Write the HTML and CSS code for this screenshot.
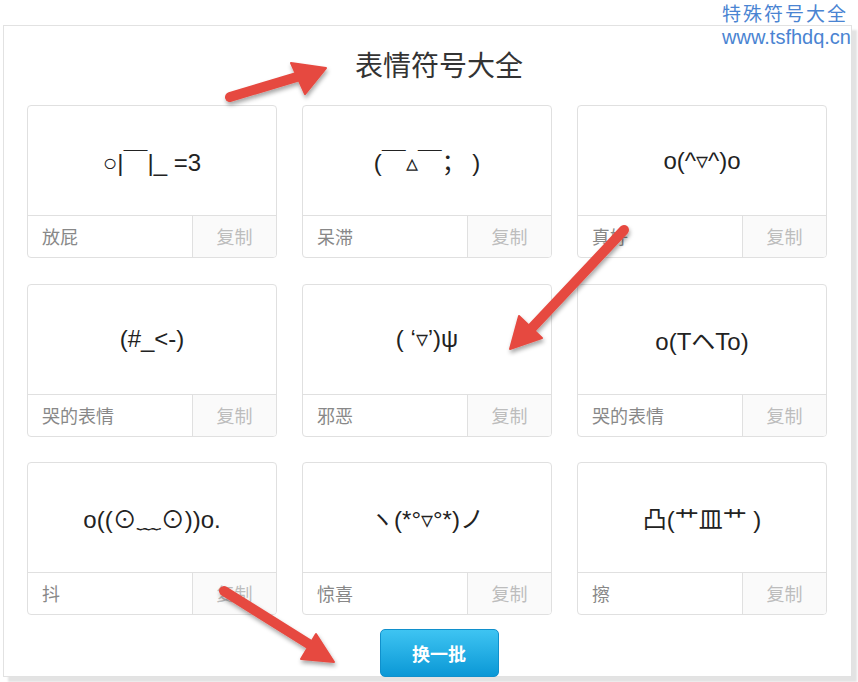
FILE: index.html
```html
<!DOCTYPE html>
<html lang="zh">
<head>
<meta charset="utf-8">
<title>表情符号大全</title>
<link rel="stylesheet" href="styles.css">
</head>
<body>
<div class="panel">
  <h1 class="title">表情符号大全</h1>
  <div class="grid">
    <div class="card"><div class="emo">○|￣|_ =3</div><div class="foot"><span class="name">放屁</span><span class="copy">复制</span></div></div>
    <div class="card"><div class="emo">(￣▵￣； )</div><div class="foot"><span class="name">呆滞</span><span class="copy">复制</span></div></div>
    <div class="card"><div class="emo">o(^▿^)o</div><div class="foot"><span class="name">真好</span><span class="copy">复制</span></div></div>
    <div class="card"><div class="emo">(#_&lt;-)</div><div class="foot"><span class="name">哭的表情</span><span class="copy">复制</span></div></div>
    <div class="card"><div class="emo">( ‘▿’)ψ</div><div class="foot"><span class="name">邪恶</span><span class="copy">复制</span></div></div>
    <div class="card"><div class="emo">o(TヘTo)</div><div class="foot"><span class="name">哭的表情</span><span class="copy">复制</span></div></div>
    <div class="card"><div class="emo">o((⊙﹏⊙))o.</div><div class="foot"><span class="name">抖</span><span class="copy">复制</span></div></div>
    <div class="card"><div class="emo">ヽ(*°▿°*)ノ</div><div class="foot"><span class="name">惊喜</span><span class="copy">复制</span></div></div>
    <div class="card"><div class="emo">凸(艹皿艹 )</div><div class="foot"><span class="name">擦</span><span class="copy">复制</span></div></div>
  </div>
  <div class="actions"><button class="btn">换一批</button></div>
</div>

<div class="watermark">
  <div class="wm-cn">特殊符号大全</div>
  <div class="wm-url">www.tsfhdq.cn</div>
</div>

<svg class="arrows" width="858" height="682" viewBox="0 0 858 682">
  <defs>
    <filter id="sh" x="-20%" y="-20%" width="140%" height="140%">
      <feDropShadow dx="1" dy="3" stdDeviation="2" flood-color="#000" flood-opacity="0.35"/>
    </filter>
  </defs>
  <g fill="#e64a41" stroke="#e64a41" filter="url(#sh)">
    <line x1="230" y1="97" x2="300" y2="76" stroke-width="10" stroke-linecap="round"/>
    <polygon points="326,68 291,63 305,94" stroke-width="2" stroke-linejoin="round"/>
    <line x1="624" y1="230" x2="530" y2="330" stroke-width="10" stroke-linecap="round"/>
    <polygon points="510,349 519,316 542,338" stroke-width="2" stroke-linejoin="round"/>
    <line x1="224" y1="591" x2="312" y2="646" stroke-width="10" stroke-linecap="round"/>
    <polygon points="334,662 316,634 301,659" stroke-width="2" stroke-linejoin="round"/>
  </g>
</svg>
</body>
</html>
```
FILE: styles.css
```css
html, body {
  margin: 0;
  padding: 0;
  background: #ffffff;
}
body {
  width: 858px;
  height: 682px;
  position: relative;
  overflow: hidden;
  font-family: "Liberation Sans", "Noto Sans CJK SC", sans-serif;
}
.panel {
  box-sizing: border-box;
  margin: 25px 0 0 3px;
  width: 849px;
  height: 652px;
  border: 1px solid #e2e2e2;
  padding: 18px 0 0 23px;
  box-shadow: 5px 5px 2px #e3e3e3;
  background: #fff;
}
.title {
  margin: 0 0 21px 0;
  height: 40px;
  line-height: 40px;
  text-align: center;
  font-size: 28px;
  font-weight: normal;
  color: #333;
  font-family: "Noto Sans CJK SC", sans-serif;
}
.grid {
  display: grid;
  grid-template-columns: repeat(3, 250px);
  grid-auto-rows: 153px;
  column-gap: 25px;
  row-gap: 25.5px;
}
.card {
  box-sizing: border-box;
  border: 1px solid #e0e0e0;
  border-radius: 4px;
  display: flex;
  flex-direction: column;
  overflow: hidden;
}
.emo {
  flex: 1;
  display: flex;
  align-items: center;
  justify-content: center;
  font-size: 24px;
  color: #222;
  white-space: pre;
}
.foot {
  height: 41px;
  border-top: 1px solid #e0e0e0;
  display: flex;
  font-family: "Noto Sans CJK SC", sans-serif;
  font-size: 18px;
}
.name {
  flex: 1;
  padding-left: 14px;
  line-height: 41px;
  color: #888;
}
.copy {
  width: 83px;
  border-left: 1px solid #e0e0e0;
  background: #fafafa;
  text-align: center;
  line-height: 41px;
  color: #bdbdbd;
}
.actions {
  margin-top: 14px;
  display: flex;
  justify-content: center;
}
.btn {
  width: 119px;
  height: 48px;
  border: 1px solid #1090cc;
  border-radius: 5px;
  background: linear-gradient(#3ec4f2, #0b98d6);
  color: #fff;
  font-family: "Noto Sans CJK SC", sans-serif;
  font-weight: bold;
  font-size: 18px;
  padding: 0;
}
.watermark {
  position: absolute;
  top: 2px;
  right: 6px;
  text-align: right;
  color: #4a84d2;
}
.wm-cn {
  font-family: "Noto Sans CJK SC", sans-serif;
  font-size: 19px;
  letter-spacing: 2px;
  margin-right: 4px;
  line-height: 21px;
}
.wm-url {
  font-family: "Liberation Sans", sans-serif;
  font-size: 20px;
  line-height: 24px;
  margin-top: 2px;
  margin-right: 1px;
}
.arrows {
  position: absolute;
  left: 0;
  top: 0;
  pointer-events: none;
}
```
